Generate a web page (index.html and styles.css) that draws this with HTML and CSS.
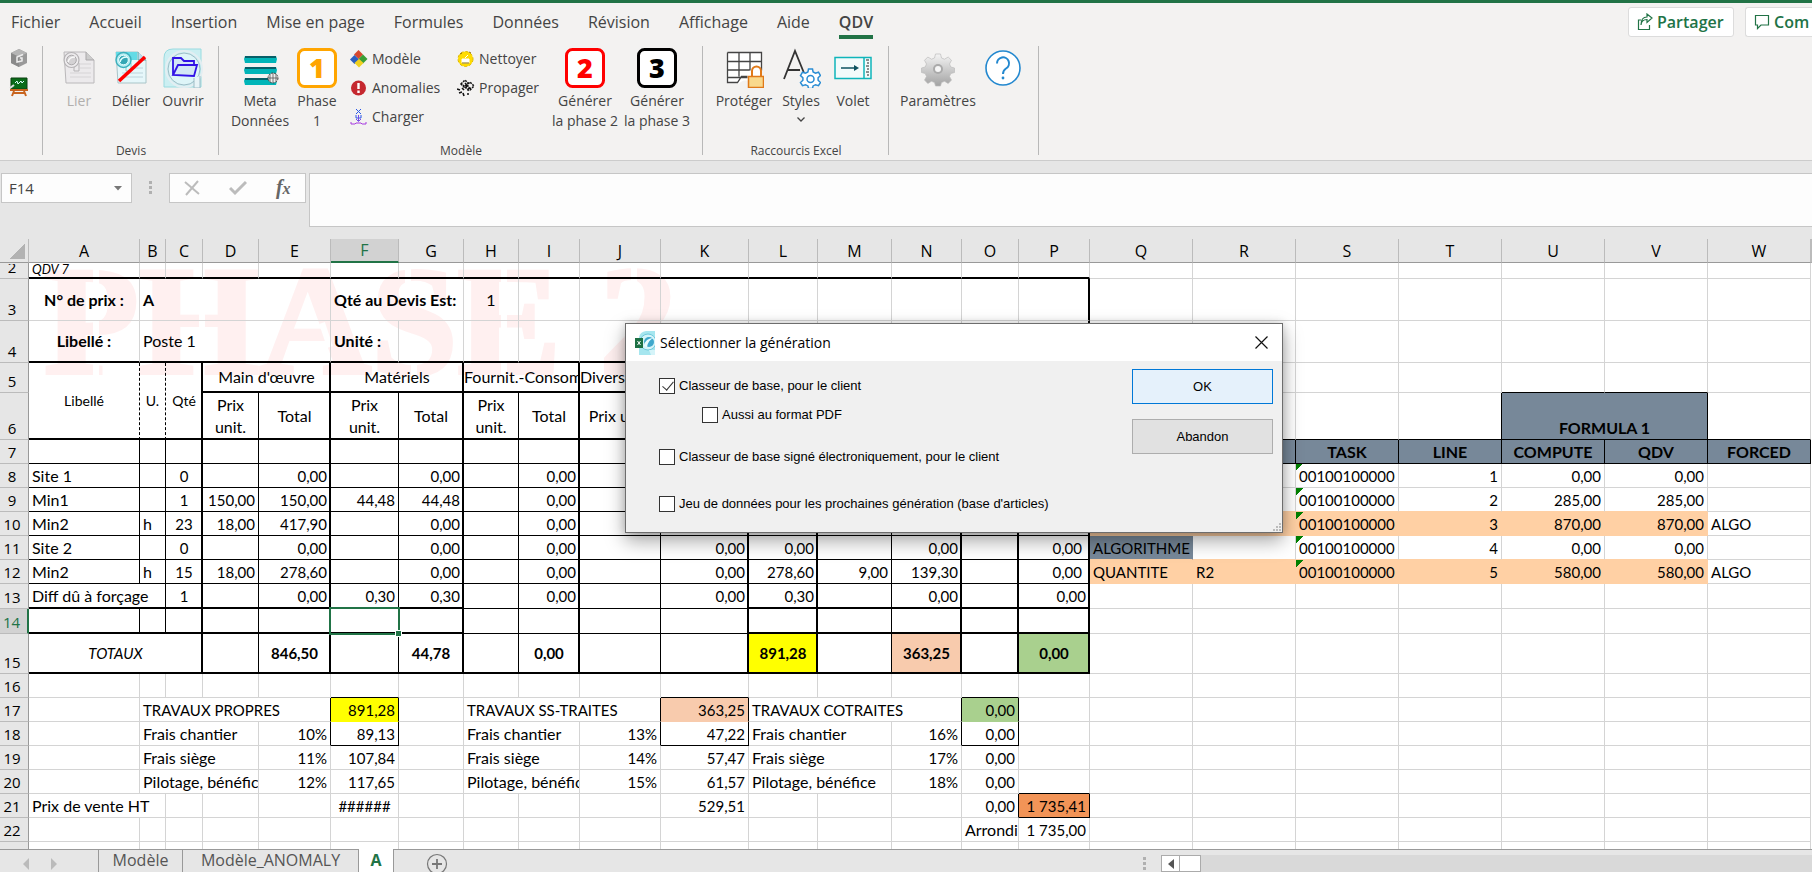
FILE: index.html
```html
<!DOCTYPE html>
<html lang="fr">
<head>
<meta charset="utf-8">
<title>QDV - Phase 2</title>
<link rel="stylesheet" href="styles.css">
</head>
<body>
<header class="top">
  <nav class="tabs">
    <a href="#">Fichier</a><a href="#">Accueil</a><a href="#">Insertion</a><a href="#">Mise en page</a><a href="#">Formules</a><a href="#">Données</a><a href="#">Révision</a><a href="#">Affichage</a><a href="#">Aide</a><a href="#" class="active">QDV</a>
  </nav>
  <div class="actions">
    <button class="share"><svg width="16" height="18" viewBox="0 0 16 18" fill="none" stroke="#217346" stroke-width="1.2"><path d="M4 7H1.500v9.500h11V12M4 12c.3-4 2.500-5.500 6-5.500V9.500l5-4.500-5-4V4C6 4 4 7 4 12z"/></svg>Partager</button>
    <button class="share cut"><svg width="16" height="18" viewBox="0 0 16 18" fill="none" stroke="#217346" stroke-width="1.2"><path d="M1.500 2.500h13v9.500H7l-3.500 3.500V12h-2z"/></svg>Com</button>
  </div>
</header>

<section class="ribbon">
  <div class="group mini">
    <button aria-label="Cube"><svg width="20" height="20" viewBox="0 0 20 20"><path d="M10 1l8 4v10l-8 4-8-4V5z" fill="#999"/><path d="M10 1l8 4-8 4-8-4z" fill="#b5b5b5"/><path d="M2 5l8 4v10l-8-4z" fill="#8a8a8a"/><path d="M14 6.500L8 9v5l5-1v-3h-2" fill="none" stroke="#eee" stroke-width="1.500"/></svg></button>
    <button aria-label="Tableau"><svg width="20" height="20" viewBox="0 0 20 20"><path d="M2 1h16v11H2z" fill="#0a6b18" stroke="#0a4010"/><path d="M6 6l2-2 1 3 3-3 1 2 2-2" stroke="#dff" fill="none"/><path d="M1 11l4-3" stroke="#ddd" stroke-width="2"/><path d="M1 13h18M5 14l-2 5M15 14l2 5M5 16h10" stroke="#c8641e" stroke-width="2" fill="none"/></svg></button>
  </div>

  <div class="group">
    <div class="items">
      <button class="big off"><svg width="40" height="40" viewBox="0 0 40 40"><path d="M5 4h22l8 8v23H7z" fill="#eceaec" stroke="#bab8ba"/><path d="M27 4v8h8" fill="#ccc" stroke="#a9a7a9"/><path d="M21 16h11M21 20h11M11 25h21M11 29h21" stroke="#d6d4d6"/><path d="M15 17v6h5v-8" fill="#eceaec" stroke="#b5b3b5"/><circle cx="12.500" cy="12" r="7.500" fill="#eeecee" stroke="#b5b3b5" stroke-width="1.200"/><circle cx="12.500" cy="12" r="4.800" fill="#d4d2d4" stroke="#aaa8aa"/><path d="M9 14q1-5 7-5" stroke="#f8f8f8" stroke-width="1.500" fill="none"/></svg>Lier</button>
      <button class="big"><svg width="40" height="40" viewBox="0 0 40 40"><path d="M5 4h22l8 8v23H7z" fill="#e6f7fa" stroke="#a9c4c8"/><path d="M5 4h21v8H5z" fill="#64dbe6"/><path d="M27 4v8h8" fill="#bde" stroke="#5aa"/><path d="M21 20h11M11 25h21M11 29h21" stroke="#bcd4dc"/><path d="M15 17v6h5v-8" fill="#dff" stroke="#8cc"/><circle cx="12.500" cy="12" r="7.500" fill="#b9edf2" stroke="#3cb0bd" stroke-width="1.500"/><circle cx="12.500" cy="12" r="4.800" fill="#35a7b5" stroke="#e6ffff"/><path d="M9 14q1-5 7-5" stroke="#e6ffff" stroke-width="1.500" fill="none"/><path d="M8 33L34 9" stroke="#f00" stroke-width="3.500"/></svg>Délier</button>
      <button class="big"><svg width="40" height="40" viewBox="0 0 40 40"><path d="M1 10Q1 1 10 1h28v38H1z" fill="#cceff2" stroke="#98dbe0"/><circle cx="21" cy="21" r="16" fill="#def5f8" stroke="#9dbcc6"/><circle cx="21" cy="21" r="18" fill="none" stroke="#e3eef2" stroke-width="2"/><path d="M31 30v10h6V28" fill="#e8f4f7" stroke="#9dbcc6"/><path d="M10 27V10h8l3 3h10v4M10 27l5-10h19l-3 11z" fill="#d3e7f5" stroke="#3213e6" stroke-width="1.800"/></svg>Ouvrir</button>
    </div>
    <h2>Devis</h2>
  </div>

  <div class="group">
    <div class="items">
      <button class="big wide"><svg width="40" height="40" viewBox="0 0 40 40"><path d="M5 8h31l1 3-1 4H5l-1-4zM5 19h31l1 3-1 4H5l-1-4zM5 30h31l1 3-1 4H5l-1-4z" fill="#00b5b8"/><path d="M5 9h31M5 20h31M5 31h31" stroke="#075f68" stroke-width="2"/><circle cx="33" cy="30" r="5" fill="#eee" stroke="#444" stroke-dasharray="2 1"/><path d="M28 30h10M33 25v10M30 26v8M36 26v8" stroke="#555" stroke-width=".8"/></svg>Meta<br>Données</button>
      <button class="big"><svg class="num" width="40" height="40" viewBox="0 0 40 40"><rect x="1.500" y="1.500" width="37" height="37" rx="6" fill="#fff" stroke="#ffa500" stroke-width="3"/><text x="20" y="30" fill="#ffa500">1</text></svg>Phase<br>1</button>
      <div class="stack first">
        <button><svg width="18" height="18" viewBox="0 0 18 18"><path d="M8.500 0l4.500 4.500L8.500 9 4 4.500z" fill="#d6492f"/><path d="M4.500 5L9 9.500 4.500 14 0 9.500z" fill="#2c5fc0"/><path d="M13 4.500L17.500 9 13 13.500 8.500 9z" fill="#3a9e35"/><path d="M9 9l4.500 4L9 17.500 4.500 13z" fill="#f0d020"/></svg>Modèle</button>
        <button><svg width="18" height="18" viewBox="0 0 18 18"><circle cx="8.500" cy="9" r="7.500" fill="#c5282f"/><path d="M8.500 4v6M8.500 11.500v2.500" stroke="#fff" stroke-width="2.400"/></svg>Anomalies</button>
        <button><svg width="18" height="18" viewBox="0 0 18 18" fill="none"><path d="M6 1l5 5M11 1L6 6M6 7v3h5V7" stroke="#2a59e8"/><path d="M8.500 7v6M6 11l2.500 2.500L11 11" stroke="#7a4be6"/><path d="M1 14v2h4l1-1h5l1 1h4v-2" stroke="#a63be0"/></svg>Charger</button>
      </div>
      <div class="stack">
        <button><svg width="18" height="18" viewBox="0 0 18 18"><circle cx="8.500" cy="9" r="7.500" fill="#ffdc00" stroke="#e0b800" stroke-dasharray="3 2"/><path d="M5 9h7v4H5zM8 8l3-3" fill="#fff" stroke="#fff"/><path d="M5 13h7M3 4l2-1M12 2l2 1" stroke="#8a6d00"/></svg>Nettoyer</button>
        <button><svg width="18" height="18" viewBox="0 0 18 18" stroke="#111" fill="none"><path d="M4 5l4-4 3 3-4 4zM9 7l4-4 4 4-4 4zM6 6l6 6M8 4l6 6" stroke-dasharray="2 1" stroke-width="1.500"/><path d="M0 10l3 1M2 14l3-1M5 9l2 2M6 14l1 3M10 15h2" stroke-width="1.600"/></svg>Propager</button>
      </div>
      <button class="big gen"><svg class="num" width="40" height="40" viewBox="0 0 40 40"><rect x="1.500" y="1.500" width="37" height="37" rx="6" fill="#fff" stroke="#f00" stroke-width="3"/><text x="20" y="30" fill="#f00">2</text></svg>Générer<br>la phase 2</button>
      <button class="big gen"><svg class="num" width="40" height="40" viewBox="0 0 40 40"><rect x="1.500" y="1.500" width="37" height="37" rx="6" fill="#fff" stroke="#000" stroke-width="3"/><text x="20" y="30" fill="#000">3</text></svg>Générer<br>la phase 3</button>
    </div>
    <h2>Modèle</h2>
  </div>

  <div class="group">
    <div class="items">
      <button class="big wide"><svg width="40" height="40" viewBox="0 0 40 40" fill="none"><path d="M3.500 4.500h34v28h-18l-5 3h-11z" fill="#fff"/><path d="M3.500 4.500h34v18M3.500 4.500v30h10l4-6h6M3.500 13.500h34M3.500 22h22M3.500 29.500h20M15 4.500v24M26 4.500v18" stroke="#444" stroke-width="1.300"/><path d="M28 29v-6a4.500 4.500 0 0 1 9 0v6" stroke="#e07a1a" stroke-width="2"/><path d="M24.500 28.500h15v11h-15z" fill="#f9d98c" stroke="#e07a1a" stroke-width="1.500"/></svg>Protéger</button>
      <button class="big styles"><svg width="40" height="40" viewBox="0 0 40 40" fill="none"><path d="M3 31L14 3l9 22M7 22h12" stroke="#333" stroke-width="1.800"/><path d="M27.500 21h4l.6 3 2.400 1.200 3-1 2 3.300-2.400 2.300v2.400l2.400 2.300-2 3.200-3-1-2.400 1.200-.6 2.600h-4l-.6-2.600-2.400-1.200-3 1-2-3.200 2.400-2.300v-2.400l-2.400-2.300 2-3.300 3 1 2.400-1.200z" fill="#fff" stroke="#2a8dd4" stroke-width="1.500"/><circle cx="29.500" cy="31" r="3.500" stroke="#2a8dd4" stroke-width="1.500"/></svg>Styles<svg class="caret" width="10" height="20" viewBox="0 0 10 20" fill="none" stroke="#444" stroke-width="1.300"><path d="M1.500 6.500L5 10l3.500-3.500"/></svg></button>
      <button class="big"><svg width="40" height="40" viewBox="0 0 40 40"><path d="M2 9.500h36v21H2z" fill="#f3fbfb" stroke="#0fb5ba" stroke-width="1.500"/><path d="M31 9v22" stroke="#0fb5ba" stroke-width="1.500"/><path d="M8 20h16" stroke="#0d5360" stroke-width="1.500"/><path d="M21 17l5 3-5 3z" fill="#0d5360"/><path d="M36 12h-3M36 15h-2M36 18h-3M36 21h-2M36 24h-3M36 27h-2" stroke="#222"/></svg>Volet</button>
    </div>
    <h2>Raccourcis Excel</h2>
  </div>

  <div class="group">
    <div class="items">
      <button class="big param"><svg width="40" height="40" viewBox="0 0 40 40"><defs><linearGradient id="g" x2="0" y2="1"><stop stop-color="#f4f4f4"/><stop offset="1" stop-color="#a2a2a2"/></linearGradient></defs><path d="M17.500 6h5l1 4 3 1.200 3.700-2.200 3.300 3.300-2 3.700 1.300 3 3.700 1v4.500l-3.700 1-1.300 3 2 3.500-3.300 3.500-3.700-2.200-3 1.200-1 3.500h-5l-1-3.500-3-1.200-3.700 2.200-3.300-3.500 2-3.500-1.300-3-3.700-1V20l3.700-1 1.300-3-2-3.700L9.800 9l3.700 2.200 3-1.200z" fill="url(#g)" stroke="#bbb" stroke-width=".7"/><circle cx="20" cy="21" r="5" fill="#aaa"/><circle cx="20" cy="21" r="3" fill="#f6f6f6"/></svg>Paramètres</button>
      <button class="big" aria-label="Aide"><svg width="40" height="40" viewBox="0 0 40 40" fill="none"><circle cx="20" cy="20" r="17" fill="#fff" stroke="#2388cf" stroke-width="1.600"/><path d="M14 15.500a6 6 0 1 1 9 5c-2 1.300-3 2.500-3 5.500" stroke="#2388cf" stroke-width="2"/><circle cx="20" cy="30" r="1.400" fill="#2388cf"/></svg></button>
    </div>
  </div>
</section>

<section class="formula">
  <div class="namebox"><input value="F14" aria-label="Zone Nom"><svg width="8" height="5" viewBox="0 0 8 5"><path d="M0 0h8L4 4.500z" fill="#777"/></svg></div>
  <svg class="dots" width="4" height="14" viewBox="0 0 4 14"><path d="M0 0h3v3H0zM0 5h3v3H0zM0 10h3v3H0z" fill="#b0b0b0"/></svg>
  <div class="fx">
    <button aria-label="Annuler"><svg width="16" height="16" viewBox="0 0 16 16" stroke="#bcbcbc" stroke-width="2"><path d="M1 2l14 12M14 1L2 15"/></svg></button>
    <button aria-label="Entrer"><svg width="18" height="16" viewBox="0 0 18 16" fill="none" stroke="#bcbcbc" stroke-width="3"><path d="M1 8l5 5L17 2"/></svg></button>
    <button class="fn"><i>f</i><i class="x">x</i></button>
  </div>
  <input class="entry" aria-label="Barre de formule">
</section>

<main class="sheet">
<svg class="mark" width="660" height="120" viewBox="0 0 660 120">
  <mask id="m"><path d="M0 0h660v120H0z" fill="#fff"/><path d="M66 0v120M172 50v34M292 60l8 24M378 0v22M384 98v22M474 0v120M604 0v20" stroke="#000" stroke-width="6"/></mask>
  <text x="14" y="110" mask="url(#m)">PHASE 2</text>
</svg>
<table>
<colgroup><col class="w29"><col class="w111"><col class="w26"><col class="w37"><col class="w56"><col class="w72"><col class="w68"><col class="w65"><col class="w55"><col class="w61"><col class="w81"><col class="w88"><col class="w69"><col class="w74"><col class="w70"><col class="w57"><col class="w71"><col class="w103" span="7"><col></colgroup>
<thead><tr><th class="corner"></th><th>A</th><th>B</th><th>C</th><th>D</th><th>E</th><th class="on">F</th><th>G</th><th>H</th><th>I</th><th>J</th><th>K</th><th>L</th><th>M</th><th>N</th><th>O</th><th>P</th><th>Q</th><th>R</th><th>S</th><th>T</th><th>U</th><th>V</th><th>W</th><th></th></tr></thead>
<tbody>
<tr class="h16"><th><div>2</div></th><td class="b tiny"><div><i>QDV 7</i></div></td><td class="b"></td><td class="b"></td><td class="b"></td><td class="b"></td><td class="b"></td><td class="b"></td><td class="b"></td><td class="b"></td><td class="b"></td><td class="b"></td><td class="b"></td><td class="b"></td><td class="b"></td><td class="b"></td><td class="b"></td><td></td><td></td><td></td><td></td><td></td><td></td><td></td></tr>
<tr class="h42"><th>3</th><td class="c"><b>N° de prix :</b></td><td colspan="4"><b>A</b></td><td colspan="2"><b>Qté au Devis Est:</b></td><td class="c">1</td><td></td><td></td><td></td><td></td><td></td><td></td><td></td><td class="t"></td><td></td><td></td><td></td><td></td><td></td><td></td><td></td></tr>
<tr class="h42"><th>4</th><td class="c b"><b>Libellé :</b></td><td class="b" colspan="4">Poste 1</td><td class="b over"><b>Unité :</b></td><td class="b"></td><td class="b"></td><td class="b"></td><td class="b"></td><td class="b"></td><td class="b"></td><td class="b"></td><td class="b"></td><td class="b"></td><td class="b t"></td><td></td><td></td><td></td><td></td><td></td><td></td><td></td></tr>
<tr class="h30"><th>5</th><td class="c b dash small" rowspan="2">Libellé</td><td class="c b dash small" rowspan="2">U.</td><td class="c b t small" rowspan="2">Qté</td><td class="c b t" colspan="2">Main d'œuvre</td><td class="c b t" colspan="2">Matériels</td><td class="c b t tight" colspan="2">Fournit.-Consom</td><td class="b t tight" colspan="2">Divers</td><td class="b t"></td><td class="b"></td><td class="b t"></td><td class="b t"></td><td class="b t"></td><td></td><td></td><td></td><td></td><td class="kb"></td><td class="kb"></td><td></td></tr>
<tr class="h47"><th>6</th><td class="c k b">Prix<br>unit.</td><td class="c b t">Total</td><td class="c k b">Prix<br>unit.</td><td class="c b t">Total</td><td class="c k b">Prix<br>unit.</td><td class="c b t">Total</td><td class="c k b">Prix unit.</td><td class="b t"></td><td class="b t"></td><td class="k b"></td><td class="b t"></td><td class="b t"></td><td class="b t"></td><td class="kb"></td><td class="kb"></td><td class="kb"></td><td class="kb k"></td><td class="slate foot c k" colspan="2"><b>FORMULA 1</b></td><td class="kb"></td></tr>
<tr class="h24 led"><th>7</th><td></td><td></td><td class="t"></td><td></td><td class="t"></td><td></td><td class="t"></td><td></td><td class="t"></td><td></td><td class="t"></td><td class="t"></td><td></td><td class="t"></td><td class="t"></td><td class="t"></td><td class="slate"></td><td class="slate"></td><td class="slate c"><b>TASK</b></td><td class="slate c"><b>LINE</b></td><td class="slate c"><b>COMPUTE</b></td><td class="slate c"><b>QDV</b></td><td class="slate c"><b>FORCED</b></td></tr>
<tr class="h24 led"><th>8</th><td>Site 1</td><td></td><td class="c t">0</td><td></td><td class="r t">0,00</td><td></td><td class="r t">0,00</td><td></td><td class="r t">0,00</td><td></td><td class="r t">0,00</td><td class="r t">0,00</td><td></td><td class="r t">0,00</td><td class="t"></td><td class="r t far">0,00</td><td class="g"></td><td class="g"></td><td class="g tri">00100100000</td><td class="g r">1</td><td class="g r">0,00</td><td class="g r">0,00</td><td class="g"></td></tr>
<tr class="h24 led"><th>9</th><td>Min1</td><td></td><td class="c t">1</td><td class="r">150,00</td><td class="r t">150,00</td><td class="r">44,48</td><td class="r t">44,48</td><td></td><td class="r t">0,00</td><td></td><td class="r t">0,00</td><td class="r t">194,48</td><td></td><td class="r t">0,00</td><td class="t"></td><td class="r t far">0,00</td><td class="g ob"></td><td class="g ob"></td><td class="g ob tri">00100100000</td><td class="g ob r">2</td><td class="g ob r">285,00</td><td class="g ob r">285,00</td><td class="g"></td></tr>
<tr class="h24 led"><th>10</th><td>Min2</td><td>h</td><td class="c t">23</td><td class="r">18,00</td><td class="r t">417,90</td><td></td><td class="r t">0,00</td><td></td><td class="r t">0,00</td><td></td><td class="r t">0,00</td><td class="r t">417,90</td><td class="r">9,00</td><td class="r t">213,90</td><td class="t"></td><td class="r t far">0,00</td><td class="o"></td><td class="o"></td><td class="o tri">00100100000</td><td class="o r">3</td><td class="o r">870,00</td><td class="o r">870,00</td><td class="g caps">ALGO</td></tr>
<tr class="h24 led"><th>11</th><td>Site 2</td><td></td><td class="c t">0</td><td></td><td class="r t">0,00</td><td></td><td class="r t">0,00</td><td></td><td class="r t">0,00</td><td></td><td class="r t">0,00</td><td class="r t">0,00</td><td></td><td class="r t">0,00</td><td class="t"></td><td class="r t far">0,00</td><td class="slate plain ob caps">ALGORITHME</td><td class="g ob"></td><td class="g ob tri">00100100000</td><td class="g ob r">4</td><td class="g ob r">0,00</td><td class="g ob r">0,00</td><td class="g"></td></tr>
<tr class="h24 led"><th>12</th><td>Min2</td><td>h</td><td class="c t">15</td><td class="r">18,00</td><td class="r t">278,60</td><td></td><td class="r t">0,00</td><td></td><td class="r t">0,00</td><td></td><td class="r t">0,00</td><td class="r t">278,60</td><td class="r">9,00</td><td class="r t">139,30</td><td class="t"></td><td class="r t far">0,00</td><td class="o caps">QUANTITE</td><td class="o caps">R2</td><td class="o tri">00100100000</td><td class="o r">5</td><td class="o r">580,00</td><td class="o r">580,00</td><td class="g caps">ALGO</td></tr>
<tr class="h25 led"><th>13</th><td class="b" colspan="2">Diff dû à forçage</td><td class="c t b">1</td><td class="b"></td><td class="r t b">0,00</td><td class="r b">0,30</td><td class="r t b">0,30</td><td></td><td class="r t">0,00</td><td></td><td class="r t">0,00</td><td class="r t b">0,30</td><td class="b"></td><td class="r t b">0,00</td><td class="t b"></td><td class="r t b">0,00</td><td class="g"></td><td class="g"></td><td class="g"></td><td class="g"></td><td class="g"></td><td class="g"></td><td class="g"></td></tr>
<tr class="h25 led"><th class="on">14</th><td class="b"></td><td class="b"></td><td class="t b"></td><td class="b"></td><td class="t b"></td><td class="b sel"><span></span></td><td class="t b"></td><td></td><td class="t"></td><td></td><td class="t"></td><td class="t b"></td><td class="b"></td><td class="t b"></td><td class="t b"></td><td class="t b"></td><td class="g"></td><td class="g"></td><td class="g"></td><td class="g"></td><td class="g"></td><td class="g"></td><td class="g"></td></tr>
<tr class="h40 led tot"><th>15</th><td class="c t b" colspan="3"><i>TOTAUX</i></td><td class="b"></td><td class="c t b"><b>846,50</b></td><td class="b"></td><td class="c t b"><b>44,78</b></td><td class="b"></td><td class="c t b"><b>0,00</b></td><td class="b"></td><td class="t b"></td><td class="c t b yel"><b>891,28</b></td><td class="b"></td><td class="c t b sal"><b>363,25</b></td><td class="t b"></td><td class="c t b grn"><b>0,00</b></td><td class="g"></td><td class="g"></td><td class="g"></td><td class="g"></td><td class="g"></td><td class="g"></td><td class="g"></td></tr>
<tr class="h24"><th>16</th><td></td><td></td><td></td><td></td><td></td><td class="kb"></td><td></td><td></td><td></td><td></td><td class="kb"></td><td></td><td></td><td></td><td class="kb"></td><td></td><td></td><td></td><td></td><td></td><td></td><td></td><td></td></tr>
<tr class="h24"><th>17</th><td></td><td class="k caps" colspan="4">TRAVAUX PROPRES</td><td class="r k yel nb">891,28</td><td></td><td class="k caps" colspan="3">TRAVAUX SS-TRAITES</td><td class="r k sal nb">363,25</td><td class="k caps" colspan="3">TRAVAUX COTRAITES</td><td class="r k grn nb">0,00</td><td></td><td></td><td></td><td></td><td></td><td></td><td></td><td></td></tr>
<tr class="h24"><th>18</th><td></td><td colspan="3">Frais chantier</td><td class="r k">10%</td><td class="r k kb">89,13</td><td></td><td colspan="2">Frais chantier</td><td class="r k">13%</td><td class="r k kb">47,22</td><td colspan="2">Frais chantier</td><td class="r k">16%</td><td class="r k kb">0,00</td><td></td><td></td><td></td><td></td><td></td><td></td><td></td><td></td></tr>
<tr class="h24"><th>19</th><td></td><td colspan="3">Frais siège</td><td class="r">11%</td><td class="r">107,84</td><td></td><td colspan="2">Frais siège</td><td class="r">14%</td><td class="r">57,47</td><td colspan="2">Frais siège</td><td class="r">17%</td><td class="r">0,00</td><td></td><td></td><td></td><td></td><td></td><td></td><td></td><td></td></tr>
<tr class="h24"><th>20</th><td></td><td colspan="3">Pilotage, bénéfice</td><td class="r">12%</td><td class="r">117,65</td><td></td><td colspan="2">Pilotage, bénéfice</td><td class="r">15%</td><td class="r">61,57</td><td colspan="2">Pilotage, bénéfice</td><td class="r">18%</td><td class="r">0,00</td><td class="kb"></td><td></td><td></td><td></td><td></td><td></td><td></td><td></td></tr>
<tr class="h24"><th>21</th><td colspan="2">Prix de vente HT</td><td></td><td></td><td></td><td class="c caps">######</td><td></td><td></td><td></td><td></td><td class="r">529,51</td><td></td><td></td><td></td><td class="r k">0,00</td><td class="r k kb org">1 735,41</td><td></td><td></td><td></td><td></td><td></td><td></td><td></td></tr>
<tr class="h24"><th>22</th><td></td><td></td><td></td><td></td><td></td><td></td><td></td><td></td><td></td><td></td><td></td><td></td><td></td><td></td><td>Arrondi</td><td class="r">1 735,00</td><td></td><td></td><td></td><td></td><td></td><td></td><td></td></tr>
<tr class="h24"><th>23</th><td></td><td></td><td></td><td></td><td></td><td></td><td></td><td></td><td></td><td></td><td></td><td></td><td></td><td></td><td></td><td></td><td></td><td></td><td></td><td></td><td></td><td></td><td></td></tr>
</tbody>
</table>
</main>

<footer class="bottom">
  <div class="arrows"><svg width="6" height="12" viewBox="0 0 6 12"><path d="M6 0v12L0 6z" fill="#bbb"/></svg><svg width="6" height="12" viewBox="0 0 6 12"><path d="M0 0v12l6-6z" fill="#bbb"/></svg></div>
  <button class="tab1">Modèle</button><button class="tab2">Modèle_ANOMALY</button><button class="cur">A</button>
  <button class="plus" aria-label="Nouvelle feuille"><svg width="22" height="22" viewBox="0 0 22 22" fill="none" stroke="#777" stroke-width="1.200"><circle cx="11" cy="11" r="9.500"/><path d="M11 6v10M6 11h10" stroke-width="1.800"/></svg></button>
  <div class="scroll">
    <svg width="4" height="14" viewBox="0 0 4 14"><path d="M0 0h3v3H0zM0 5h3v3H0zM0 10h3v3H0z" fill="#b0b0b0"/></svg>
    <div class="track"><button aria-label="Défiler à gauche"><svg width="6" height="10" viewBox="0 0 6 10"><path d="M6 0v10L0 5z" fill="#555"/></svg></button><span class="thumb"></span></div>
  </div>
</footer>

<div class="dialog" role="dialog" aria-labelledby="dt">
  <div class="title">
    <svg width="20" height="24" viewBox="0 0 20 24"><path d="M4 6q1-5 7-6h9v24H4z" fill="#a6e6ef"/><circle cx="13" cy="11" r="8" fill="#d5f4f9" stroke="#6fc9db"/><circle cx="14" cy="11" r="5" fill="#3fa8cc"/><path d="M9 15q1-8 10-8-6 2-7 9z" fill="#e8fbff"/><path d="M14 19h6v5h-4z" fill="#d5f4f9"/><path d="M0 7h8v10H0z" fill="#1d7044"/><path d="M2.500 10l3 4M5.500 10l-3 4" stroke="#fff"/></svg>
    <span id="dt">Sélectionner la génération</span>
    <button aria-label="Fermer"><svg width="13" height="13" viewBox="0 0 13 13" stroke="#111" stroke-width="1.200"><path d="M.5.5l12 12M12.500.5l-12 12"/></svg></button>
  </div>
  <div class="body">
    <div class="opts">
      <label><input type="checkbox" checked>Classeur de base, pour le client</label>
      <label class="sub"><input type="checkbox">Aussi au format PDF</label>
      <label class="third"><input type="checkbox">Classeur de base signé électroniquement, pour le client</label>
      <label class="fourth"><input type="checkbox">Jeu de données pour les prochaines génération (base d'articles)</label>
    </div>
    <div class="btns"><button class="ok">OK</button><button>Abandon</button></div>
  </div>
  <svg class="grip" width="9" height="9" viewBox="0 0 9 9"><path d="M6 0h2v2H6zM3 3h2v2H3zM6 3h2v2H6zM0 6h2v2H0zM3 6h2v2H3zM6 6h2v2H6z" fill="#bbb"/></svg>
</div>
</body>
</html>
```
FILE: styles.css
```css
* { box-sizing: border-box; }
body { margin: 0; height: 100vh; display: flex; flex-direction: column; overflow: hidden; background: #e6e6e6; font-family: "Open Sans", sans-serif; font-size: 14px; color: #444; }
button { border: 0; background: none; padding: 0; font: inherit; color: inherit; }
input { font: inherit; color: inherit; }
svg { flex: none; display: block; }

.top { display: flex; height: 43px; border-top: 3px solid #217346; background: #f3f2f1; }
.tabs { display: flex; gap: 29px; padding-left: 11px; font-size: 16px; line-height: 38px; }
.tabs a { color: #444; text-decoration: none; white-space: nowrap; }
.tabs .active { font-weight: 600; height: 36px; border-bottom: 4px solid #217346; }
.actions { display: flex; gap: 11px; margin-left: auto; padding-top: 4px; }
.share { display: flex; align-items: center; gap: 4px; height: 30px; width: 106px; padding-left: 8px; border: 1px solid #dcdcdc; border-radius: 3px; background: #fff; color: #217346; font-weight: 600; font-size: 16px; }
.cut { width: 67px; border-right: 0; border-radius: 3px 0 0 3px; overflow: hidden; }

.ribbon { display: flex; height: 118px; padding-top: 3px; background: #f3f2f1; border-bottom: 1px solid #ccc; }
.group { display: flex; flex-direction: column; height: 109px; padding: 0 9px 0 10px; border-right: 1px solid #b8b8b8; }
.mini { width: 43px; gap: 9px; padding-top: 2px; padding-left: 9px; }
.items { display: flex; align-items: flex-start; }
.group h2 { margin: auto 0 0; font-size: 12px; font-weight: 400; line-height: 9px; text-align: center; }
.big { display: flex; flex-direction: column; align-items: center; width: 52px; padding-top: 2px; line-height: 20px; text-align: center; white-space: nowrap; }
.big > svg:first-child { margin-bottom: 3px; }
.big.wide { width: 62px; }
.big.gen { width: 72px; }
.big.param { width: 78px; }
.off { color: #b1afad; }
.num text { font: 800 27px "Open Sans", sans-serif; text-anchor: middle; }
.stack { display: flex; flex-direction: column; width: 92px; margin-top: -2px; }
.stack.first { width: 114px; padding-left: 7px; }
.stack button { display: flex; align-items: center; gap: 4px; height: 29px; white-space: nowrap; }

.formula { display: flex; align-items: flex-start; height: 78px; padding: 12px 0 0 1px; }
.namebox { display: flex; align-items: center; width: 131px; height: 30px; padding: 0 9px 0 7px; border: 1px solid #c6c6c6; background: #fdfdfd; }
.namebox input { flex: 1; min-width: 0; padding: 0; border: 0; background: none; font-size: 15px; }
.dots { margin: 8px 16px 0 17px; }
.fx { display: flex; align-items: center; justify-content: space-around; width: 137px; height: 30px; margin-right: 3px; border: 1px solid #c6c6c6; background: #fdfdfd; }
.fn { font: 700 20px/22px "Liberation Serif", serif; color: #666; }
.fn .x { font-size: 16px; }
.entry { flex: 1; height: 54px; border: 1px solid #c6c6c6; border-right: 0; background: #fdfdfd; }

.sheet { position: relative; flex: 1; min-height: 0; overflow: hidden; background: #fff; }
.mark { position: absolute; left: 30px; top: 24px; }
.mark text { font: 700 155px "Liberation Serif", serif; fill: #fff0f0; stroke: #fff0f0; stroke-width: 4px; }
table { position: relative; width: 100%; table-layout: fixed; border-collapse: separate; border-spacing: 0; font-family: Lato, sans-serif; font-size: 16px; line-height: 20px; color: #000; }
.w29 { width: 29px; } .w111 { width: 111px; } .w26 { width: 26px; } .w37 { width: 37px; } .w56 { width: 56px; } .w72 { width: 72px; } .w68 { width: 68px; } .w65 { width: 65px; } .w55 { width: 55px; } .w61 { width: 61px; } .w81 { width: 81px; } .w88 { width: 88px; } .w69 { width: 69px; } .w74 { width: 74px; } .w70 { width: 70px; } .w57 { width: 57px; } .w71 { width: 71px; } .w103 { width: 103px; }
th { padding: 0; font: 400 15px/22px "Open Sans", sans-serif; background: #e6e6e6; }
thead th { height: 24px; border-right: 1px solid #bbb; border-bottom: 1px solid #999; font-size: 16px; }
thead th.on { line-height: 20px; background: #d2d2d2; border-bottom: 2px solid #217346; color: #217346; }
thead th.corner { background: linear-gradient(135deg, transparent 50%, #b2b2b2 50%) 9px 4px / 16px 16px no-repeat #e6e6e6; }
tbody th { padding-right: 4px; vertical-align: bottom; border-right: 1px solid #999; border-bottom: 1px solid #bbb; }
tbody th.on { background: #d2d2d2; border-right: 2px solid #217346; color: #217346; }
td { padding: 0 3px; overflow: hidden; white-space: nowrap; text-align: left; vertical-align: middle; border-right: 1px solid #d4d4d4; border-bottom: 1px solid #d4d4d4; }
.h16 { height: 16px; } .h24 { height: 24px; } .h25 { height: 25px; } .h30 { height: 30px; } .h40 { height: 40px; } .h42 { height: 42px; } .h47 { height: 47px; line-height: 22px; }
.h16 div { display: flex; align-items: flex-end; justify-content: center; height: 14px; overflow: hidden; }
.h16 td div { justify-content: flex-start; line-height: 15px; }
.led td { border-color: #000; }
.led .g { border-color: #d4d4d4; }
td.b { border-bottom: 2px solid #000; }
td.t { border-right: 2px solid #000; padding-right: 2px; }
td.k { border-right-color: #000; }
td.kb { border-bottom-color: #000; }
td.dash { border-right: 1px dashed #000; }
.c { text-align: center; }
.r { text-align: right; }
.led .c, td.r, td.tri, td.caps { font-size: 15px; }
.led .slate.c { font-size: 16px; }
td.far { padding-right: 6px; }
td.small { font-size: 14px; }
td.tiny { font-size: 13px; }
td.tight { padding: 0; }
td.over { overflow: visible; }
td.foot { vertical-align: bottom; }
td.slate { background: #778899; border-color: #000; }
.led td.plain { border-right-color: #778899; }
.led td.o { background-color: #ffd0a4; border-color: #ffd0a4; }
.led td.ob { border-bottom-color: #ffd0a4; }
td.tri { background-image: linear-gradient(135deg, #008000 50%, transparent 50%); background-size: 7px 7px; background-repeat: no-repeat; }
td.yel { background: #ff0; border-bottom-color: #ff0; }
td.sal { background: #f8cbad; border-bottom-color: #f8cbad; }
td.grn { background: #a9d08e; border-bottom-color: #a9d08e; }
.led td.b { border-bottom-color: #000; }
td.org { background: #f29457; }
td.sel { position: relative; overflow: visible; }
.sel span { position: absolute; inset: -2px -2px -3px -2px; border: 2px solid #217346; }
.sel span::after { content: ""; position: absolute; right: -3px; bottom: -3px; width: 5px; height: 5px; background: #217346; outline: 1px solid #fff; }

.bottom { display: flex; height: 23px; border-top: 1px solid #999; background: #e6e6e6; font-size: 16px; line-height: 20px; color: #555; }
.arrows { display: flex; align-items: center; gap: 22px; width: 98px; padding: 5px 0 0 23px; }
.bottom button { white-space: nowrap; }
.tab1 { width: 84px; border-left: 1px solid #999; }
.tab2 { width: 177px; border-left: 1px solid #999; border-right: 1px solid #999; }
.bottom .tab1, .bottom .tab2, .bottom .cur { height: 22px; line-height: 20px; padding-bottom: 2px; }
.bottom .cur { width: 35px; margin-top: -1px; background: #fff; border-right: 1px solid #999; color: #217346; font-weight: 700; height: 23px; }
.bottom .plus { padding-top: 3px; margin-left: 32px; height: 25px; }
.scroll { display: flex; gap: 14px; width: 669px; margin-left: auto; padding-top: 5px; }
.scroll > svg { margin-top: 2px; }
.track { display: flex; flex: 1; background: #d9d9d9; }
.track button { display: flex; align-items: center; justify-content: center; width: 19px; border: 1px solid #ababab; background: #fff; }
.thumb { width: 21px; border: 1px solid #ababab; border-left: 0; background: #fff; }

.dialog { position: absolute; left: 625px; top: 323px; width: 658px; height: 210px; border: 1px solid #6d6d6d; background: #f0f0f0; box-shadow: 0 8px 18px rgba(0,0,0,.35), 0 0 8px rgba(0,0,0,.15); color: #000; }
.title { display: flex; align-items: center; gap: 5px; height: 37px; padding: 0 14px 0 9px; background: #fff; font-size: 14px; }
.title button { margin-left: auto; }
.body { display: flex; justify-content: space-between; padding: 8px 9px 0 33px; font: 13px/16px "Liberation Sans", sans-serif; }
.opts { display: flex; flex-direction: column; padding-top: 9px; }
.opts label { display: flex; align-items: center; gap: 4px; }
.opts input { appearance: none; width: 16px; height: 16px; margin: 0; border: 1px solid #333; background: #fff; }
.opts input:checked::before { content: ""; display: block; width: 5px; height: 10px; margin: 0 0 0 5px; border: solid #333; border-width: 0 1px 1px 0; transform: rotate(40deg); }
.opts .sub { margin: 13px 0 0 43px; }
.opts .third { margin-top: 26px; }
.opts .fourth { margin-top: 31px; }
.btns { display: flex; flex-direction: column; gap: 15px; }
.btns button { width: 141px; height: 35px; border: 1px solid #adadad; background: #e1e1e1; }
.btns .ok { border-color: #0078d7; background: #e5f1fb; }
.grip { position: absolute; right: 0; bottom: 0; }
```
